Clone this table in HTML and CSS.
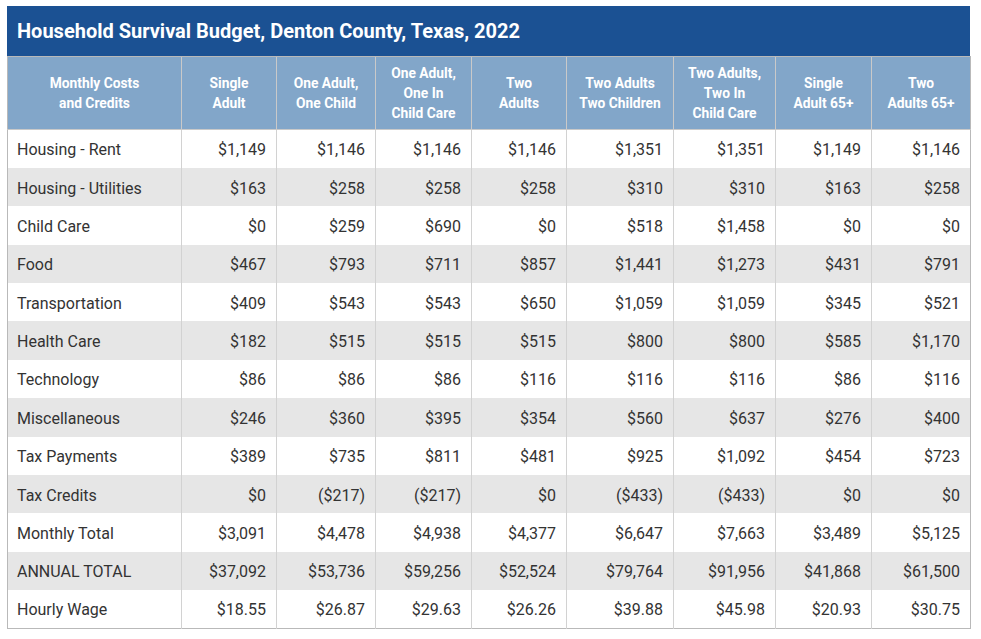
FILE: index.html
```html
<!DOCTYPE html>
<html>
<head>
<meta charset="utf-8">
<link rel="stylesheet" href="styles.css">
</head>
<body>
<div class="budget">
  <div class="title">Household Survival Budget, Denton County, Texas, 2022</div>
  <table class="grid">
    <colgroup>
      <col class="c0"><col class="c1"><col class="c2"><col class="c3"><col class="c4"><col class="c5"><col class="c6"><col class="c7"><col class="c8">
    </colgroup>
    <thead>
      <tr>
        <th>Monthly Costs<br>and Credits</th>
        <th>Single<br>Adult</th>
        <th>One Adult,<br>One Child</th>
        <th>One Adult,<br>One In<br>Child Care</th>
        <th>Two<br>Adults</th>
        <th>Two Adults<br>Two Children</th>
        <th>Two Adults,<br>Two In<br>Child Care</th>
        <th>Single<br>Adult 65+</th>
        <th>Two<br>Adults 65+</th>
      </tr>
    </thead>
    <tbody>
      <tr><td>Housing - Rent</td><td>$1,149</td><td>$1,146</td><td>$1,146</td><td>$1,146</td><td>$1,351</td><td>$1,351</td><td>$1,149</td><td>$1,146</td></tr>
      <tr><td>Housing - Utilities</td><td>$163</td><td>$258</td><td>$258</td><td>$258</td><td>$310</td><td>$310</td><td>$163</td><td>$258</td></tr>
      <tr><td>Child Care</td><td>$0</td><td>$259</td><td>$690</td><td>$0</td><td>$518</td><td>$1,458</td><td>$0</td><td>$0</td></tr>
      <tr><td>Food</td><td>$467</td><td>$793</td><td>$711</td><td>$857</td><td>$1,441</td><td>$1,273</td><td>$431</td><td>$791</td></tr>
      <tr><td>Transportation</td><td>$409</td><td>$543</td><td>$543</td><td>$650</td><td>$1,059</td><td>$1,059</td><td>$345</td><td>$521</td></tr>
      <tr><td>Health Care</td><td>$182</td><td>$515</td><td>$515</td><td>$515</td><td>$800</td><td>$800</td><td>$585</td><td>$1,170</td></tr>
      <tr><td>Technology</td><td>$86</td><td>$86</td><td>$86</td><td>$116</td><td>$116</td><td>$116</td><td>$86</td><td>$116</td></tr>
      <tr><td>Miscellaneous</td><td>$246</td><td>$360</td><td>$395</td><td>$354</td><td>$560</td><td>$637</td><td>$276</td><td>$400</td></tr>
      <tr><td>Tax Payments</td><td>$389</td><td>$735</td><td>$811</td><td>$481</td><td>$925</td><td>$1,092</td><td>$454</td><td>$723</td></tr>
      <tr><td>Tax Credits</td><td>$0</td><td>($217)</td><td>($217)</td><td>$0</td><td>($433)</td><td>($433)</td><td>$0</td><td>$0</td></tr>
      <tr><td>Monthly Total</td><td>$3,091</td><td>$4,478</td><td>$4,938</td><td>$4,377</td><td>$6,647</td><td>$7,663</td><td>$3,489</td><td>$5,125</td></tr>
      <tr><td>ANNUAL TOTAL</td><td>$37,092</td><td>$53,736</td><td>$59,256</td><td>$52,524</td><td>$79,764</td><td>$91,956</td><td>$41,868</td><td>$61,500</td></tr>
      <tr><td>Hourly Wage</td><td>$18.55</td><td>$26.87</td><td>$29.63</td><td>$26.26</td><td>$39.88</td><td>$45.98</td><td>$20.93</td><td>$30.75</td></tr>
    </tbody>
  </table>
</div>
</body>
</html>
```
FILE: styles.css
```css
html, body {
  margin: 0;
  padding: 0;
  background: #ffffff;
}
body {
  font-family: Roboto, "Liberation Sans", sans-serif;
}
.budget {
  margin: 6px 0 0 7px;
  width: 963px;
}
.title {
  background: #1b5193;
  color: #ffffff;
  font-weight: 700;
  font-size: 20px;
  height: 50px;
  line-height: 50px;
  padding-left: 10px;
  box-sizing: border-box;
}
.grid {
  width: 963px;
  border-collapse: collapse;
  table-layout: fixed;
  border-left: 1px solid #b9b9b9;
  border-right: 1px solid #b9b9b9;
  border-bottom: 1px solid #b9b9b9;
}
.c0 { width: 174px; }
.c1 { width: 95px; }
.c2 { width: 99px; }
.c3 { width: 96px; }
.c4 { width: 95px; }
.c5 { width: 107px; }
.c6 { width: 102px; }
.c7 { width: 96px; }
.c8 { width: 99px; }
.grid th {
  background: #82a6c9;
  color: #ffffff;
  font-weight: 700;
  font-size: 13.8px;
  line-height: 20px;
  height: 73px;
  padding: 0 4px 1px;
  box-sizing: border-box;
  text-align: center;
  vertical-align: middle;
  border-left: 1px solid #c9c9c9;
  border-top: 1px solid #b9b9b9;
  border-bottom: 1px solid #c9c9c9;
}
.grid th:first-child {
  border-left: 1px solid #b9b9b9;
}
.grid td {
  font-size: 16px;
  color: #333333;
  height: 38.38px;
  padding: 2px 10px 0;
  box-sizing: border-box;
  text-align: right;
  vertical-align: middle;
  border-left: 1px solid #d2d2d2;
}
.grid td:first-child {
  text-align: left;
  padding-left: 9px;
  border-left: 1px solid #b9b9b9;
}
.grid tbody tr:nth-child(even) td {
  background: #e6e6e6;
}
```
